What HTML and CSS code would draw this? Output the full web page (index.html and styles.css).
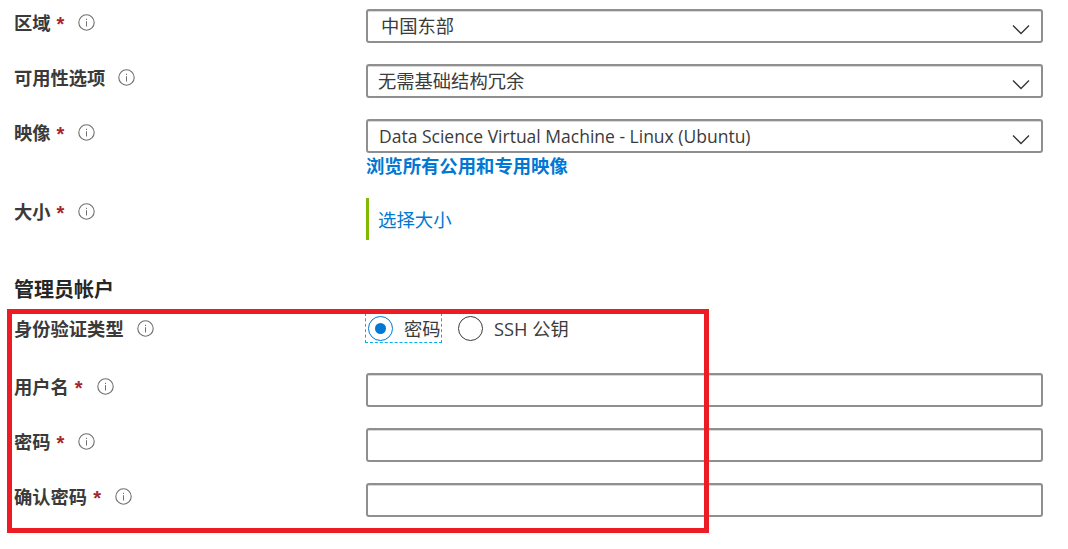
FILE: index.html
```html
<!DOCTYPE html>
<html lang="zh-CN">
<head>
<meta charset="utf-8">
<title>管理员帐户</title>
<link rel="stylesheet" href="styles.css">
</head>
<body>
<svg class="defs" width="0" height="0" aria-hidden="true">
  <symbol id="info" viewBox="0 0 17 17">
    <circle cx="8.5" cy="8.5" r="7.7" fill="none" stroke="#6f6f6f" stroke-width="1.1"/>
    <rect x="8" y="7.2" width="1" height="5.3" fill="#6f6f6f"/>
    <rect x="8" y="4.8" width="1" height="1.2" fill="#6f6f6f"/>
  </symbol>
  <symbol id="chev" viewBox="0 0 18 11">
    <path d="M1 1.5 L9 9.5 L17 1.5" fill="none" stroke="#333" stroke-width="1.3"/>
  </symbol>
</svg>
<main class="form">
  <div class="row">
    <div class="label"><span>区域</span><i class="star">*</i><svg class="info"><use href="#info"/></svg></div>
    <div class="control"><div class="box select"><span class="val v1">中国东部</span><svg class="chev"><use href="#chev"/></svg></div></div>
  </div>
  <div class="row r-next">
    <div class="label"><span>可用性选项</span><svg class="info far"><use href="#info"/></svg></div>
    <div class="control"><div class="box select"><span class="val">无需基础结构冗余</span><svg class="chev"><use href="#chev"/></svg></div></div>
  </div>
  <div class="row r-next">
    <div class="label"><span>映像</span><i class="star">*</i><svg class="info"><use href="#info"/></svg></div>
    <div class="control">
      <div class="box select"><span class="val latin">Data Science Virtual Machine - Linux (Ubuntu)</span><svg class="chev"><use href="#chev"/></svg></div>
      <a class="browse">浏览所有公用和专用映像</a>
    </div>
  </div>
  <div class="row r-size">
    <div class="label"><span>大小</span><i class="star">*</i><svg class="info"><use href="#info"/></svg></div>
    <div class="control"><div class="size"><a>选择大小</a></div></div>
  </div>
  <h2 class="section">管理员帐户</h2>
  <div class="row r-auth">
    <div class="label lab-auth"><span>身份验证类型</span><svg class="info far"><use href="#info"/></svg></div>
    <div class="control radios">
      <div class="radio focus"><span class="dot on"></span><span class="rlabel">密码</span></div>
      <div class="radio"><span class="dot"></span><span class="rlabel">SSH 公钥</span></div>
    </div>
  </div>
  <div class="row r-user">
    <div class="label"><span>用户名</span><i class="star">*</i><svg class="info"><use href="#info"/></svg></div>
    <div class="control"><div class="box input"></div></div>
  </div>
  <div class="row r-next">
    <div class="label"><span>密码</span><i class="star">*</i><svg class="info"><use href="#info"/></svg></div>
    <div class="control"><div class="box input"></div></div>
  </div>
  <div class="row r-next">
    <div class="label"><span>确认密码</span><i class="star">*</i><svg class="info"><use href="#info"/></svg></div>
    <div class="control"><div class="box input"></div></div>
  </div>
</main>
<div class="highlight"></div>
</body>
</html>
```

FILE: styles.css
```css
* { box-sizing: border-box; }
html, body { margin: 0; padding: 0; background: #fff; }
body {
  width: 1068px;
  height: 549px;
  overflow: hidden;
  position: relative;
  font-family: "Open Sans", "Noto Sans CJK SC", sans-serif;
  color: #3b3b3b;
}
.defs { position: absolute; }
.form { padding: 9px 0 0 14px; display: flex; flex-direction: column; }
.row { display: grid; grid-template-columns: 352px 677px; }
.r-next { margin-top: 21px; }
.r-size { margin-top: 20px; }
.r-auth { margin-top: 12px; }
.r-user { margin-top: 31px; }

.label {
  display: flex;
  align-items: center;
  height: 26px;
  font-family: "Noto Sans CJK SC", sans-serif;
  font-size: 18.3px;
  font-weight: 700;
  color: #3a3a3a;
  line-height: 26px;
}
.lab-auth { margin-top: 1px; }
.star {
  font-family: "Liberation Sans", sans-serif;
  font-style: normal;
  font-weight: 700;
  font-size: 20px;
  color: #a4262c;
  margin-left: 6px;
  line-height: 20px;
  height: 16px;
}
.info { width: 17px; height: 17px; margin-left: 14px; flex: none; }
.info.far { margin-left: 13px; }

.box {
  width: 677px;
  height: 34px;
  border: 2px solid #8f8f8f;
  border-radius: 3px;
  background: #fff;
  box-shadow: inset 0 1px 0 #d8d8d8;
}
.select {
  display: flex;
  align-items: center;
  justify-content: space-between;
  padding: 0 11px 2px 10px;
}
.val {
  font-family: "Noto Sans CJK SC", sans-serif;
  font-size: 18.3px;
  line-height: 30px;
  color: #3b3b3b;
  white-space: nowrap;
}
.v1 { padding-left: 3px; }
.latin {
  font-family: "Open Sans", "Noto Sans CJK SC", sans-serif;
  font-size: 17.5px;
  padding-left: 1px;
  margin-top: 2px;
}
.chev { width: 18px; height: 11px; margin-top: 8px; flex: none; }

.browse {
  display: block;
  margin-top: -1px;
  font-family: "Noto Sans CJK SC", sans-serif;
  font-size: 18.35px;
  font-weight: 700;
  line-height: 26px;
  color: #0078d4;
}
.size {
  height: 42px;
  border-left: 3px solid #7fba00;
  padding-left: 9px;
  display: flex;
  align-items: center;
  font-family: "Noto Sans CJK SC", sans-serif;
  font-size: 18.4px;
  color: #0078d4;
}
.section {
  margin: 35px 0 0;
  font-family: "Noto Sans CJK SC", sans-serif;
  font-size: 20px;
  font-weight: 700;
  line-height: 27px;
  color: #262626;
}
.radios { display: flex; align-items: center; height: 28px; gap: 17px; }
.radio { display: flex; align-items: center; height: 28px; }
.focus { outline: 1px dashed #00b0f0; width: 75px; }
.dot {
  width: 25px;
  height: 25px;
  border: 1.5px solid #3b3b3b;
  border-radius: 50%;
  display: flex;
  align-items: center;
  justify-content: center;
  flex: none;
  margin-right: 11px;
}
.dot.on { border-color: #0078d4; margin-left: 2px; }
.dot.on::after {
  content: "";
  width: 11px;
  height: 11px;
  border-radius: 50%;
  background: #0078d4;
}
.rlabel {
  font-family: "Open Sans", "Noto Sans CJK SC", sans-serif;
  font-size: 18.3px;
  color: #3b3b3b;
  white-space: nowrap;
}
.highlight {
  position: absolute;
  left: 7px;
  top: 309px;
  width: 702px;
  height: 224px;
  border: 5px solid #ed1c24;
}
```
